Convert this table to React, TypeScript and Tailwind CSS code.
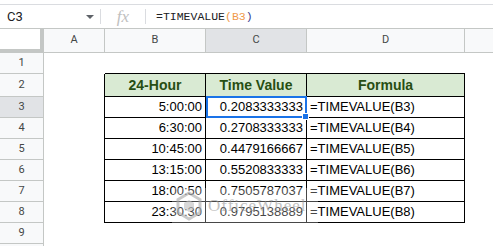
import React from "react";

const data = [
  ["5:00:00", "0.2083333333", "=TIMEVALUE(B3)"],
  ["6:30:00", "0.2708333333", "=TIMEVALUE(B4)"],
  ["10:45:00", "0.4479166667", "=TIMEVALUE(B5)"],
  ["13:15:00", "0.5520833333", "=TIMEVALUE(B6)"],
  ["18:00:50", "0.7505787037", "=TIMEVALUE(B7)"],
  ["23:30:30", "0.9795138889", "=TIMEVALUE(B8)"],
];

function RowHead({ n, active }: { n?: number; active?: boolean }) {
  return (
    <div
      className={`w-[44px] shrink-0 flex items-center justify-center border-r border-b border-[#c4c7c5] text-[11px] text-[#444746] font-['Roboto',Arial,sans-serif] ${
        active ? "bg-[#e1e3e6]" : "bg-[#f8f9fa]"
      }`}
    >
      {n}
    </div>
  );
}

export default function App() {
  const cell = "font-['Liberation_Sans',Arial,sans-serif] text-[13px] text-black";
  return (
    <div className="relative w-[493px] h-[246px] overflow-hidden bg-white">
      {/* top line */}
      <div className="h-[5px] border-b border-[#dadce0]" />
      {/* formula bar */}
      <div className="h-[24px] flex items-center border-b border-[#c4c7c5]">
        <div className="w-[100px] h-full flex items-center justify-between pl-[7px] pr-[6px]">
          <span className="text-[13px] text-[#202124] font-['Roboto',Arial,sans-serif]">C3</span>
          <svg width="8" height="4" viewBox="0 0 8 4">
            <path d="M0 0 L8 0 L4 4 Z" fill="#5f6368" />
          </svg>
        </div>
        <div className="w-px h-[15px] bg-[#dadce0]" />
        <div className="w-[44px] flex items-center justify-center">
          <span className="text-[17px] italic text-[#c0c0c0] font-['Liberation_Serif',serif] leading-none">fx</span>
        </div>
        <div className="w-px h-[15px] bg-[#dadce0]" />
        <div className="pl-[10px] text-[11.5px] font-['Liberation_Mono',monospace] text-[#202124]">
          =TIMEVALUE<span className="text-[#f09a4a]">(B3</span>
          <span className="text-[#3c3a8c]">)</span>
        </div>
      </div>
      {/* column headers */}
      <div className="h-[24px] flex text-[11px] text-[#444746] font-['Roboto',Arial,sans-serif]">
        <div className="w-[44px] shrink-0 bg-white border-r-[4px] border-b-[4px] border-[#c4c7c5]" />
        <div className="w-[61px] shrink-0 flex items-center justify-center bg-[#f8f9fa] border-r border-b border-[#c4c7c5]">A</div>
        <div className="w-[101px] shrink-0 flex items-center justify-center bg-[#f8f9fa] border-r border-b border-[#c4c7c5]">B</div>
        <div className="w-[101px] shrink-0 flex items-center justify-center bg-[#e1e3e6] border-r border-b border-[#c4c7c5]">C</div>
        <div className="w-[158px] shrink-0 flex items-center justify-center bg-[#f8f9fa] border-r border-b border-[#c4c7c5]">D</div>
        <div className="flex-1 bg-[#f8f9fa] border-b border-[#c4c7c5]" />
      </div>
      {/* row 1 */}
      <div className="h-[21px] flex">
        <RowHead n={1} />
        <div className="w-[61px] shrink-0" />
        <div className="w-[101px] shrink-0 border-b border-black" />
        <div className="w-[101px] shrink-0 border-b border-black" />
        <div className="w-[158px] shrink-0 border-b border-black" />
        <div className="flex-1" />
      </div>
      {/* row 2 header */}
      <div className="h-[23px] flex">
        <RowHead n={2} />
        <div className="w-[61px] shrink-0 border-r border-black" />
        {["24-Hour", "Time Value"].map((t) => (
          <div
            key={t}
            className="w-[101px] shrink-0 border-r border-b border-black bg-[#d9ead3] flex items-center justify-center text-[14px] font-bold text-[#274e13] font-['Liberation_Sans',Arial,sans-serif]"
          >
            {t}
          </div>
        ))}
        <div className="w-[158px] shrink-0 border-r border-b border-black bg-[#d9ead3] flex items-center justify-center text-[14px] font-bold text-[#274e13] font-['Liberation_Sans',Arial,sans-serif]">
          Formula
        </div>
        <div className="flex-1" />
      </div>
      {/* data rows */}
      {data.map((r, i) => (
        <div key={i} className="h-[21px] flex">
          <RowHead n={i + 3} active={i === 0} />
          <div className="w-[61px] shrink-0 border-r border-black" />
          <div className={`w-[101px] shrink-0 border-r border-b border-black flex items-center justify-end pr-[3px] ${cell}`}>
            {r[0]}
          </div>
          <div className={`relative w-[101px] shrink-0 border-r border-b border-black flex items-center justify-end pr-[3px] ${cell}`}>
            {r[1]}
            {i === 0 && (
              <div className="absolute z-10 left-0 right-[-1px] top-[-1px] bottom-[-1px] border-2 border-[#1a73e8]">
                <div className="absolute right-[-4px] bottom-[-4px] w-[7px] h-[7px] bg-[#1a73e8] border border-white" />
              </div>
            )}
          </div>
          <div className={`w-[158px] shrink-0 border-r border-b border-black flex items-center pl-[3px] ${cell}`}>
            {r[2]}
          </div>
          <div className="flex-1" />
        </div>
      ))}
      {/* row 9 */}
      <div className="h-[21px] flex">
        <RowHead n={9} />
        <div className="flex-1" />
      </div>
      {/* row 10 (cut off) */}
      <div className="h-[21px] flex">
        <RowHead />
        <div className="flex-1" />
      </div>
      {/* watermark */}
      <div className="absolute left-[172px] top-[188px] w-[146px] h-[35px] bg-white/40 flex items-center gap-[6px] pl-[4px] opacity-70">
        <svg width="26" height="30" viewBox="0 0 26 30">
          <path d="M13 2 L24 8.5 L24 21.5 L13 28 L2 21.5 L2 8.5 Z" fill="none" stroke="#b5b5b5" strokeWidth="3" />
          <path d="M13 9 L18 12 L18 18 L13 21 L8 18 L8 12 Z" fill="#c8c8c8" />
        </svg>
        <span className="text-[17px] text-[#a8a8a8] font-['Liberation_Serif',serif] tracking-[1px]">OfficeWheel</span>
      </div>
    </div>
  );
}
